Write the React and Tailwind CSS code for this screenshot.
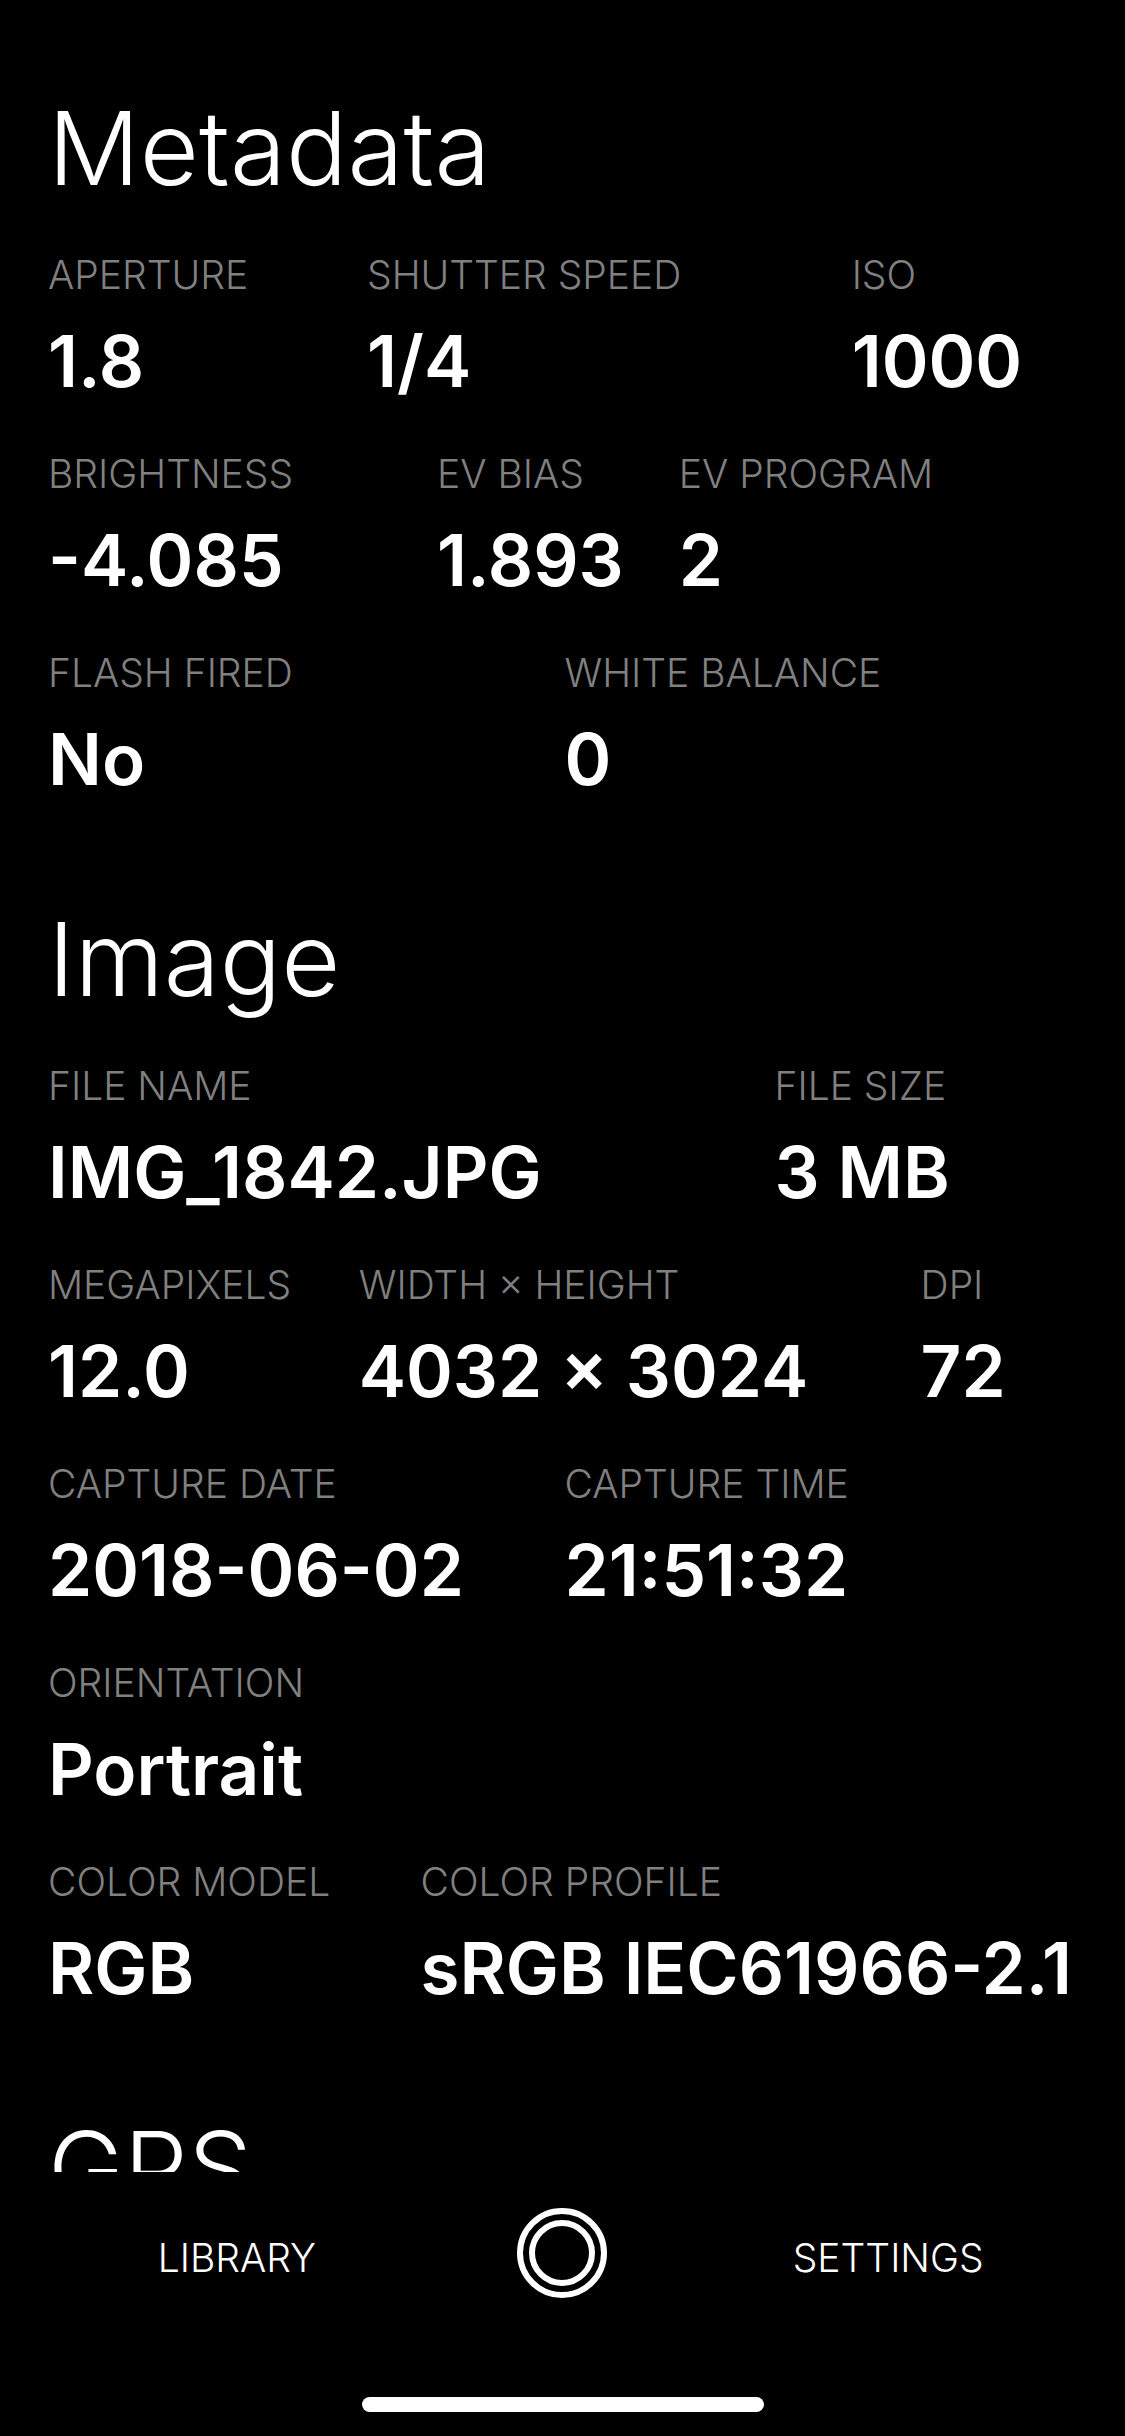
const sections = [
  {
    title: "Metadata",
    rows: [
      {
        cols: "grid-cols-[310fr_471fr_219fr]",
        items: [
          { label: "APERTURE", value: "1.8" },
          { label: "SHUTTER SPEED", value: "1/4" },
          { label: "ISO", value: "1000" },
        ],
      },
      {
        cols: "grid-cols-[378fr_235fr_387fr]",
        items: [
          { label: "BRIGHTNESS", value: "-4.085" },
          { label: "EV BIAS", value: "1.893" },
          { label: "EV PROGRAM", value: "2" },
        ],
      },
      {
        cols: "grid-cols-2 gap-x-1",
        items: [
          { label: "FLASH FIRED", value: "No" },
          { label: "WHITE BALANCE", value: "0" },
        ],
      },
    ],
  },
  {
    title: "Image",
    rows: [
      {
        cols: "grid-cols-[706fr_294fr]",
        items: [
          { label: "FILE NAME", value: "IMG_1842.JPG" },
          { label: "FILE SIZE", value: "3 MB" },
        ],
      },
      {
        cols: "grid-cols-[302fr_546fr_152fr]",
        items: [
          { label: "MEGAPIXELS", value: "12.0" },
          { label: "WIDTH × HEIGHT", value: "4032 × 3024" },
          { label: "DPI", value: "72" },
        ],
      },
      {
        cols: "grid-cols-2 gap-x-1",
        items: [
          { label: "CAPTURE DATE", value: "2018-06-02" },
          { label: "CAPTURE TIME", value: "21:51:32" },
        ],
      },
      {
        cols: "grid-cols-1",
        items: [{ label: "ORIENTATION", value: "Portrait" }],
      },
      {
        cols: "grid-cols-[362fr_638fr]",
        items: [
          { label: "COLOR MODEL", value: "RGB" },
          { label: "COLOR PROFILE", value: "sRGB IEC61966-2.1" },
        ],
      },
    ],
  },
  { title: "GPS", rows: [] },
];

function Field({ label, value }) {
  return (
    <div className="min-w-0 whitespace-nowrap">
      <dt className="text-[39px] leading-[48px] font-light text-[#808080]">{label}</dt>
      <dd className="mt-[18px] text-[71px] leading-[88px] font-semibold">{value}</dd>
    </div>
  );
}

function Section({ title, rows }) {
  return (
    <section>
      <h2 className="text-[102px] leading-[120px] font-light">{title}</h2>
      <div className="mt-[43px] flex flex-col gap-[45px]">
        {rows.map((row, index) => (
          <dl key={index} className={"grid " + row.cols}>
            {row.items.map((item) => (
              <Field key={item.label} label={item.label} value={item.value} />
            ))}
          </dl>
        ))}
      </div>
    </section>
  );
}

function ShutterIcon() {
  return (
    <svg viewBox="0 0 90 90" className="size-[90px]" fill="none" stroke="currentColor" strokeWidth="6">
      <circle cx="45" cy="45" r="42" />
      <circle cx="45" cy="45" r="30" />
    </svg>
  );
}

export default function App() {
  return (
    <div className="flex h-screen flex-col bg-black font-['Inter',sans-serif] text-white">
      <main className="flex min-h-0 flex-1 flex-col gap-24 overflow-y-auto px-12 pt-[88px] [scrollbar-width:none]">
        {sections.map((section) => (
          <Section key={section.title} title={section.title} rows={section.rows} />
        ))}
      </main>

      <nav className="grid shrink-0 grid-cols-3 items-start justify-items-center px-[74px] pt-9 text-[39px] leading-[48px] font-light">
        <button type="button" className="pt-[26px]">LIBRARY</button>
        <button type="button" aria-label="Capture">
          <ShutterIcon />
        </button>
        <button type="button" className="pt-[26px]">SETTINGS</button>
      </nav>

      {/* home indicator */}
      <div className="mt-[99px] mb-6 h-[15px] w-[402px] shrink-0 self-center rounded-full bg-white" />
    </div>
  );
}
